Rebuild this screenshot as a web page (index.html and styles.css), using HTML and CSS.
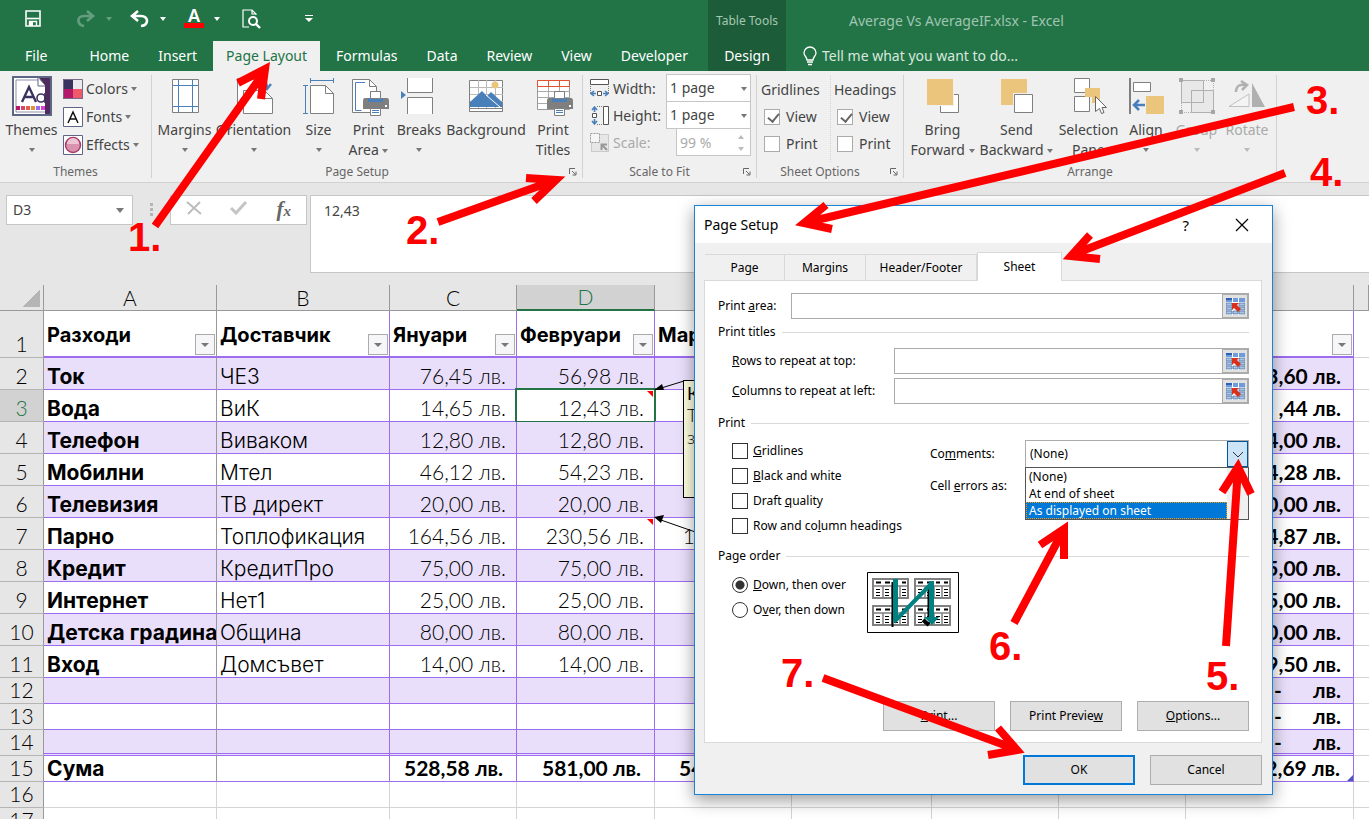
FILE: index.html
```html
<!DOCTYPE html>
<html lang="en">
<head>
  <meta charset="UTF-8" />
  <meta name="viewport" content="width=device-width, initial-scale=1.0" />
  <title>Average Vs AverageIF.xlsx - Excel</title>
  <link rel="stylesheet" href="styles.css">
</head>
<body>

  <header class="app-header">
    <div class="title-row">
      <div class="qat">
        <button class="save" aria-label="Save"><svg width="16" height="17" viewBox="0 0 16 17" fill="none" stroke="#fff" stroke-width="1.6"><path d="M1 1h14v15H1z"/><path d="M2 8.500h12" /><path d="M4.500 16v-4.500h7V16" stroke-width="1.400"/><path d="M5 12h3v4H5z" fill="#fff" stroke="none"/></svg></button>
        <button class="dim" aria-label="Redo"><svg width="20" height="18" viewBox="0 0 20 18" fill="none" stroke="#fff" stroke-width="2.6"><path d="M11 1l6 5-6 5M17 6H8c-8 0-7 9 0 10"/></svg><i class="caret"></i></button>
        <button aria-label="Undo"><svg width="20" height="18" viewBox="0 0 20 18" fill="none" stroke="#fff" stroke-width="2.6"><path d="M8 1L2 6l6 5M2 6h9c8 0 8 9 0 10"/></svg><i class="caret"></i></button>
        <button aria-label="Font color"><span class="font-color">A</span><i class="caret"></i></button>
        <button class="preview" aria-label="Print preview"><svg width="20" height="20" viewBox="0 0 20 20" fill="none" stroke="#fff" stroke-width="1.2"><path d="M7 18H1V1h9l4 4v1M10 1v4h4"/><circle cx="11" cy="12" r="4" stroke-width="2"/><path d="M14 15l4 4" stroke-width="2.4"/></svg></button>
        <button aria-label="Customize"><i class="caret barred"></i></button>
      </div>
      <div class="context-title">Table Tools</div>
      <div class="doc-title">Average Vs AverageIF.xlsx - Excel</div>
    </div>
    <div class="tab-row">
      <nav class="tabs">
        <a href="#" class="file">File</a>
        <a href="#">Home</a>
        <a href="#">Insert</a>
        <a href="#" class="active">Page Layout</a>
        <a href="#">Formulas</a>
        <a href="#">Data</a>
        <a href="#">Review</a>
        <a href="#">View</a>
        <a href="#">Developer</a>
      </nav>
      <a href="#" class="design">Design</a>
      <button class="tell-me"><svg width="14" height="20" viewBox="0 0 14 20" fill="none" stroke="#fff" stroke-width="1.3"><path d="M4 14c0-3-3-4-3-7a6 6 0 0 1 12 0c0 3-3 4-3 7zM4 16h6M5 18.500h4"/></svg>Tell me what you want to do...</button>
    </div>
  </header>

  <section class="ribbon">
    <div class="group themes">
      <div class="group-body">
        <button class="big"><svg width="40" height="40" viewBox="0 0 40 40"><path d="M1 1h38v38H1z" fill="#fff" stroke="#5d6785" stroke-width="2"/><path d="M4 4h24l6 6v26H4z" fill="#fff" stroke="#8d94ab"/><path d="M27 2h11v36h-5V9z" fill="#4f2a5c"/><path d="M26 2v8h7" fill="#fff" stroke="#5d6785"/><path d="M10 26l7-15 7 15M12.500 21h9" fill="none" stroke="#3b335f" stroke-width="2.400"/><circle cx="29" cy="22" r="4" fill="none" stroke="#3b335f" stroke-width="1.600"/><path d="M33 17v10" stroke="#3b335f" stroke-width="1.600"/><path d="M4 30h4v4H4z" fill="#b5176b"/><path d="M9 30h4v4H9z" fill="#d9445f"/><path d="M14 30h4v4h-4z" fill="#e25e4b"/><path d="M19 30h4v4h-4z" fill="#e0913c"/><path d="M24 30h4v4h-4z" fill="#9a6cf0"/><path d="M29 30h4v4h-4z" fill="#dd3fd0"/></svg><span>Themes</span><i class="caret"></i></button>
        <div class="stack">
          <button><svg width="20" height="20" viewBox="0 0 20 20"><path d="M0 0h10v10H0z" fill="#3b335f"/><path d="M10 0h10v10H10z" fill="#e9e9ee"/><path d="M0 10h10v10H0z" fill="#b5176b"/><path d="M10 10h10v10H10z" fill="#f0596a"/><path d="M.5.5h19v19H.5z" fill="none" stroke="#776a86"/></svg>Colors<i class="caret"></i></button>
          <button><svg width="20" height="20" viewBox="0 0 20 20"><path d="M.5.5h19v19H.5z" fill="#fff" stroke="#5d6785"/><path d="M5 16l5-11 5 11M6.500 12h7" fill="none" stroke="#111" stroke-width="1.500"/></svg>Fonts<i class="caret"></i></button>
          <button><svg width="20" height="20" viewBox="0 0 20 20"><path d="M.5.5h19v19H.5z" fill="#fff" stroke="#5d6785"/><circle cx="10" cy="10" r="7.500" fill="#d893ae" stroke="#a83a6c" stroke-width="1.500"/><path d="M4 9a6 6 0 0 1 12 0z" fill="#ecc6d4"/></svg>Effects<i class="caret"></i></button>
        </div>
      </div>
      <div class="group-label">Themes</div>
    </div>

    <div class="group page-setup">
      <div class="group-body">
        <button class="big margins"><svg width="40" height="40" viewBox="0 0 40 40"><path d="M7.500 3.500h26v33h-26z" fill="#fff" stroke="#7f7f7f"/><path d="M13.500 4v32M27.500 4v32M8 9.500h25M8 30.500h25" stroke="#4a80ba"/></svg><span>Margins</span><i class="caret"></i></button>
        <button class="big orientation"><svg width="40" height="40" viewBox="0 0 40 40"><path d="M3.500 32.500v-30h15l6 6v10" fill="#fff" stroke="#7f7f7f"/><path d="M9.500 37.500v-23h21l8 8v15z" fill="#fff" stroke="#7f7f7f"/><path d="M30.500 14.500v8h8" fill="none" stroke="#7f7f7f"/><path d="M24 4q9 0 9 8M28 8l5 5 4-5" fill="none" stroke="#4a80ba" stroke-width="2.500"/></svg><span>Orientation</span><i class="caret"></i></button>
        <button class="big size"><svg width="40" height="40" viewBox="0 0 40 40"><path d="M11.500 9.500h15l8 8v20h-23z" fill="#fff" stroke="#7f7f7f"/><path d="M26.500 9.500v8h8" fill="none" stroke="#7f7f7f"/><path d="M11.500 2v5M34.500 2v5M11 4.500h24M4 9.500h5M4 37.500h5M6.500 9v29" stroke="#4a80ba"/></svg><span>Size</span><i class="caret"></i></button>
        <button class="big print-area"><svg width="40" height="40" viewBox="0 0 40 40"><path d="M3.500 3.500h17l7 7v26h-24z" fill="#fff" stroke="#7f7f7f"/><path d="M20.500 3.500v7h7" fill="none" stroke="#7f7f7f"/><path d="M16 6.500H6.500v28h6" fill="none" stroke="#4a80ba"/><use href="#printer"/></svg><span>Print<br>Area <i class="caret"></i></span></button>
        <button class="big breaks"><svg width="40" height="40" viewBox="0 0 40 40"><path d="M8.500 2v14.500h25V2M8.500 38V21.500h25V38" fill="#fff" stroke="#7f7f7f"/><path d="M2 15l5 4-5 4z" fill="#4a80ba"/></svg><span>Breaks</span><i class="caret"></i></button>
        <button class="big background"><svg width="40" height="40" viewBox="0 0 40 40"><path d="M3.500 4.500h33v31h-33z" fill="#fff" stroke="#7f7f7f"/><path d="M12.500 4v31M20.500 4v31M29.500 4v31M4 11.500h33M4 18.500h33M4 25.500h33" stroke="#bbb"/><path d="M4 31v-5l12-11 5 5 4-4 11 10v5z" fill="#4a80ba"/><path d="M20 19l14 12" stroke="#fff"/><circle cx="29" cy="9" r="3.500" fill="#ecc57c"/><path d="M3.500 32.500h33v3h-33z" fill="#fff" stroke="#7f7f7f"/></svg><span>Background</span></button>
        <button class="big titles"><svg width="40" height="40" viewBox="0 0 40 40"><path d="M4.500 4.500h32v29h-32z" fill="#fff" stroke="#999"/><path d="M15.500 9v24M26.500 9v24M5 15.500h32M5 21.500h32M5 27.500h32" stroke="#aaa"/><path d="M4.500 4.500h32v6h-32zM15.500 5v5M26.500 5v5" fill="#fff" stroke="#e0532f"/><use href="#printer"/></svg><span>Print<br>Titles</span></button>
      </div>
      <div class="group-label with-launcher">Page Setup<button class="launcher" aria-label="Page Setup options"><svg width="9" height="9" viewBox="0 0 9 9"><use href="#launch"/></svg></button></div>
    </div>

    <div class="group scale">
      <div class="group-body rows">
        <div class="row"><svg width="20" height="20" viewBox="0 0 20 20"><path d="M.5.5h18v5H.5z" fill="#fff" stroke="#555"/><path d="M.5 7v8M18.500 7v8" stroke="#777" stroke-dasharray="1 1"/><path d="M7.500 12.500h4v4h-4z" fill="#fff" stroke="#555"/><path d="M6 14.500H1M4 12l-3 2.500L4 17M13 14.500h5M15 12l3 2.500-3 2.500" fill="none" stroke="#4a80ba" stroke-width="1.600"/></svg><label for="w">Width:</label><select id="w"><option>1 page</option></select><i class="caret"></i></div>
        <div class="row"><svg width="20" height="20" viewBox="0 0 20 20"><path d="M13.500.5h5v18h-5z" fill="#fff" stroke="#555"/><path d="M7 .5h6M7 18.500h6" stroke="#777" stroke-dasharray="1 1"/><path d="M2.500 7.500h4v4h-4z" fill="#fff" stroke="#555"/><path d="M4.500 6V1M2 4l2.500-3L7 4M4.500 13v5M2 15l2.500 3L7 15" fill="none" stroke="#4a80ba" stroke-width="1.600"/></svg><label for="h">Height:</label><select id="h"><option>1 page</option></select><i class="caret"></i></div>
        <div class="row off"><svg width="20" height="20" viewBox="0 0 20 20"><path d="M1.500 1.500h17v17h-17z" fill="#e6e6e6" stroke="#aaa" stroke-dasharray="1 1"/><path d="M.5.5h9v9h-9z" fill="#f6f6f6" stroke="#999" stroke-dasharray="2 1"/><path d="M17 17l-5-5M11.500 17v-5.500H17" fill="none" stroke="#999" stroke-width="2"/></svg><label for="sc">Scale:</label><input id="sc" type="text" value="99 %" disabled><span class="spin"><i class="caret up"></i><i class="caret"></i></span></div>
      </div>
      <div class="group-label with-launcher">Scale to Fit<button class="launcher" aria-label="Scale options"><svg width="9" height="9" viewBox="0 0 9 9"><use href="#launch"/></svg></button></div>
    </div>

    <div class="group sheet-options">
      <div class="group-body">
        <div class="option-col"><span>Gridlines</span><label><input type="checkbox" checked>View</label><label><input type="checkbox">Print</label></div>
        <div class="option-col"><span>Headings</span><label><input type="checkbox" checked>View</label><label><input type="checkbox">Print</label></div>
      </div>
      <div class="group-label with-launcher">Sheet Options<button class="launcher" aria-label="Sheet options"><svg width="9" height="9" viewBox="0 0 9 9"><use href="#launch"/></svg></button></div>
    </div>

    <div class="group arrange">
      <div class="group-body">
        <button class="big bring"><svg width="40" height="40" viewBox="0 0 40 40"><path d="M17.500 18.500h18v18h-18z" fill="#fff" stroke="#7f7f7f"/><path d="M3 1h28v29H3z" fill="#f0f0f0"/><path d="M4 3h26v26H4z" fill="#ecc57c"/></svg><span>Bring<br>Forward <i class="caret"></i></span></button>
        <button class="big send"><svg width="40" height="40" viewBox="0 0 40 40"><path d="M4 3h26v26H4z" fill="#ecc57c"/><path d="M16 17h21v21H16z" fill="#f0f0f0"/><path d="M17.500 18.500h18v18h-18z" fill="#fff" stroke="#7f7f7f"/></svg><span>Send<br>Backward <i class="caret"></i></span></button>
        <button class="big selection"><svg width="40" height="40" viewBox="0 0 40 40"><path d="M5.500 2.500h15v14h-15zM5.500 20.500h15v15h-15z" fill="#fff" stroke="#7f7f7f"/><path d="M16 12h15v15h-8v-6h-7z" fill="#ecc57c"/><path d="M26.500 20.500v15l4-3 2 5 2.500-1-2-5h4.500z" fill="#fff" stroke="#666"/></svg><span>Selection<br>Pane</span></button>
        <button class="big align"><svg width="40" height="40" viewBox="0 0 40 40"><path d="M3 2h2v36H3z" fill="#7f7f7f"/><path d="M7.500 6.500h17v9h-17z" fill="#fff" stroke="#7f7f7f"/><path d="M20 20h18v18H20z" fill="#ecc57c"/><path d="M19 29H8M13 24l-5 5 5 5" fill="none" stroke="#4a80ba" stroke-width="2.500"/></svg><span>Align</span><i class="caret"></i></button>
        <button class="big group-btn off" disabled><svg width="40" height="40" viewBox="0 0 40 40"><path d="M4.500 4.500h22v22h-22zM14.500 14.500h22v22h-22z" fill="#e8e8e8" stroke="#b0b0b0"/><path d="M4.500 7v28M36.500 7v28M7 4.500h28M7 36.500h28" stroke="#b0b0b0" stroke-dasharray="1 1"/><path d="M14.500 14.500h12v12h-12z" fill="none" stroke="#b0b0b0"/><path d="M2 2h4v4H2zM34 2h4v4h-4zM2 34h4v4H2zM34 34h4v4h-4z" fill="#a6a6a6"/></svg><span>Group</span><i class="caret"></i></button>
        <button class="big rotate off" disabled><svg width="40" height="40" viewBox="0 0 40 40"><path d="M2 30.500h20V18z" fill="#f4f4f4" stroke="#c0c0c0"/><path d="M25 31V7l13 24z" fill="#b0b0b0"/><path d="M9 16c0-7 5-8 10-7M14 5l6 4-5 5" fill="none" stroke="#b0b0b0" stroke-width="2.500"/></svg><span>Rotate</span><i class="caret"></i></button>
      </div>
      <div class="group-label">Arrange</div>
    </div>
  </section>

  <section class="formula-bar">
    <div class="name-box"><input type="text" value="D3" aria-label="Name box"><i class="caret"></i></div>
    <i class="dots"></i>
    <div class="fx-buttons">
      <button aria-label="Cancel"><svg width="16" height="16" viewBox="0 0 16 16" stroke="#bdbdbd" stroke-width="2"><path d="M1 2l14 12M14 2L2 14"/></svg></button>
      <button aria-label="Enter"><svg width="18" height="14" viewBox="0 0 18 14" fill="none" stroke="#c4c4c4" stroke-width="3"><path d="M1 7l5 5L16 1"/></svg></button>
      <button class="fx" aria-label="Insert function"><i>f<small>x</small></i></button>
    </div>
    <textarea aria-label="Formula bar">12,43</textarea>
  </section>

  <main class="sheet">
    <table>
      <colgroup><col class="c-head"><col class="c-a"><col class="c-a"><col class="c-c"><col class="c-d"><col class="c-e"><col class="c-f"><col class="c-c"><col class="c-c"><col class="c-i"><col></colgroup>
      <thead>
        <tr><th class="corner"></th><th>A</th><th>B</th><th>C</th><th class="sel">D</th><th></th><th></th><th></th><th></th><th></th><th></th></tr>
      </thead>
      <tbody>
        <tr class="names"><th>1</th>
          <td><div>Разходи<button aria-label="Filter"><i class="caret"></i></button></div></td>
          <td><div>Доставчик<button aria-label="Filter"><i class="caret"></i></button></div></td>
          <td><div>Януари<button aria-label="Filter"><i class="caret"></i></button></div></td>
          <td><div>Февруари<button aria-label="Filter"><i class="caret"></i></button></div></td>
          <td><div>Март</div></td>
          <td></td><td></td><td></td>
          <td><div><span></span><button aria-label="Filter"><i class="caret"></i></button></div></td><td></td></tr>
        <tr class="band"><th>2</th><td>Ток</td><td>ЧЕЗ</td><td>76,45 лв.</td><td>56,98 лв.</td><td></td><td></td><td></td><td></td><td>3,60 лв.</td><td></td></tr>
        <tr><th class="sel">3</th><td>Вода</td><td>ВиК</td><td>14,65 лв.</td><td class="cursor">12,43 лв.</td><td></td><td></td><td></td><td></td><td>,44 лв.</td><td></td></tr>
        <tr class="band"><th>4</th><td>Телефон</td><td>Виваком</td><td>12,80 лв.</td><td>12,80 лв.</td><td></td><td></td><td></td><td></td><td>4,00 лв.</td><td></td></tr>
        <tr><th>5</th><td>Мобилни</td><td>Мтел</td><td>46,12 лв.</td><td>54,23 лв.</td><td></td><td></td><td></td><td></td><td>4,28 лв.</td><td></td></tr>
        <tr class="band"><th>6</th><td>Телевизия</td><td>ТВ директ</td><td>20,00 лв.</td><td>20,00 лв.</td><td></td><td></td><td></td><td></td><td>0,00 лв.</td><td></td></tr>
        <tr><th>7</th><td>Парно</td><td>Топлофикация</td><td>164,56 лв.</td><td class="noted">230,56 лв.</td><td>164,56 лв.</td><td></td><td></td><td></td><td>4,87 лв.</td><td></td></tr>
        <tr class="band"><th>8</th><td>Кредит</td><td>КредитПро</td><td>75,00 лв.</td><td>75,00 лв.</td><td></td><td></td><td></td><td></td><td>5,00 лв.</td><td></td></tr>
        <tr><th>9</th><td>Интернет</td><td>Нет1</td><td>25,00 лв.</td><td>25,00 лв.</td><td></td><td></td><td></td><td></td><td>5,00 лв.</td><td></td></tr>
        <tr class="band"><th>10</th><td>Детска градина</td><td>Община</td><td>80,00 лв.</td><td>80,00 лв.</td><td></td><td></td><td></td><td></td><td>0,00 лв.</td><td></td></tr>
        <tr><th>11</th><td>Вход</td><td>Домсъвет</td><td>14,00 лв.</td><td>14,00 лв.</td><td></td><td></td><td></td><td></td><td>9,50 лв.</td><td></td></tr>
        <tr class="band short"><th>12</th><td></td><td></td><td></td><td></td><td></td><td></td><td></td><td></td><td><div class="empty"><span>-</span><span>лв.</span></div></td><td></td></tr>
        <tr class="short"><th>13</th><td></td><td></td><td></td><td></td><td></td><td></td><td></td><td></td><td><div class="empty"><span>-</span><span>лв.</span></div></td><td></td></tr>
        <tr class="band short last"><th>14</th><td></td><td></td><td></td><td></td><td></td><td></td><td></td><td></td><td><div class="empty"><span>-</span><span>лв.</span></div></td><td></td></tr>
        <tr class="short total"><th>15</th><td>Сума</td><td></td><td>528,58 лв.</td><td>581,00 лв.</td><td>548,12 лв.</td><td></td><td></td><td></td><td class="end">2,69 лв.</td><td></td></tr>
        <tr class="short blank"><th>16</th><td></td><td></td><td></td><td></td><td></td><td></td><td></td><td></td><td></td><td></td></tr>
        <tr class="short blank"><th>17</th><td></td><td></td><td></td><td></td><td></td><td></td><td></td><td></td><td></td><td></td></tr>
      </tbody>
    </table>
    <div class="note"><b>К</b><br>Т<br>з</div>
    <svg class="note-lines" width="60" height="170" viewBox="0 0 60 170"><path d="M34 11L8 19M54 165L8 149" stroke="#000"/><path d="M4 20l8-6 2 6zM4 147l10-2-3 8z"/></svg>
  </main>

  <section class="dialog" role="dialog" aria-label="Page Setup">
    <div class="dialog-title"><h1>Page Setup</h1><button aria-label="Help">?</button><button aria-label="Close"><svg width="14" height="14" viewBox="0 0 14 14" stroke="#000" stroke-width="1.200"><path d="M1 1l12 12M13 1L1 13"/></svg></button></div>
    <div class="dialog-tabs">
      <button class="t-page">Page</button><button class="t-margins">Margins</button><button class="t-header">Header/Footer</button><button class="t-sheet">Sheet</button>
    </div>
    <div class="panel">
      <div class="field"><label for="area">Print <u>a</u>rea:</label><div class="range"><input id="area" type="text"><button aria-label="Select range"><svg width="19" height="17" viewBox="0 0 19 17"><use href="#picker"/></svg></button></div></div>
      <div class="legend">Print titles</div>
      <div class="field wide"><label for="rows"><u>R</u>ows to repeat at top:</label><div class="range"><input id="rows" type="text"><button aria-label="Select rows"><svg width="19" height="17" viewBox="0 0 19 17"><use href="#picker"/></svg></button></div></div>
      <div class="field wide"><label for="cols"><u>C</u>olumns to repeat at left:</label><div class="range"><input id="cols" type="text"><button aria-label="Select columns"><svg width="19" height="17" viewBox="0 0 19 17"><use href="#picker"/></svg></button></div></div>
      <div class="legend print">Print</div>
      <div class="print-options">
        <div class="checks">
          <label><input type="checkbox"><span><u>G</u>ridlines</span></label>
          <label><input type="checkbox"><span><u>B</u>lack and white</span></label>
          <label><input type="checkbox"><span>Draft <u>q</u>uality</span></label>
          <label><input type="checkbox"><span>Row and co<u>l</u>umn headings</span></label>
        </div>
        <div class="combos">
          <div class="combo"><label for="comments">Co<u>m</u>ments:</label>
            <div class="combo-box"><select id="comments"><option>(None)</option><option>At end of sheet</option><option>As displayed on sheet</option></select><span class="drop"><svg width="12" height="7" viewBox="0 0 12 7" fill="none" stroke="#333"><path d="M1 1l5 5 5-5"/></svg></span>
              <ul class="menu" role="listbox"><li role="option">(None)</li><li role="option">At end of sheet</li><li role="option" class="hot">As displayed on sheet</li></ul>
            </div>
          </div>
          <div class="combo"><label for="errors">Cell <u>e</u>rrors as:</label><div class="combo-box"><select id="errors"></select></div></div>
        </div>
      </div>
      <div class="legend">Page order</div>
      <div class="order">
        <div class="checks">
          <label><input type="radio" name="order" checked><span><u>D</u>own, then over</span></label>
          <label><input type="radio" name="order"><span>O<u>v</u>er, then down</span></label>
        </div>
        <svg class="order-pic" width="92" height="61" viewBox="0 0 92 61">
          <path d="M.5.500h91v60H.5z" fill="#fff" stroke="#000"/>
          <use href="#sheetlet" x="5" y="6"/><use href="#sheetlet" x="47" y="6"/><use href="#sheetlet" x="5" y="33"/><use href="#sheetlet" x="47" y="33"/>
          <path d="M25.500 10v45M61.500 18v30" stroke="#000" stroke-width="2"/><path d="M56 48l6 5" stroke="#000" stroke-width="4"/>
          <path d="M28.500 7v42M64.500 9v38" stroke="#008080" stroke-width="5" fill="none"/><path d="M27 50L65 11" stroke="#008080" stroke-width="4"/><path d="M57 45h15l-7 8z" fill="#008080"/>
        </svg>
      </div>
      <div class="actions"><button><u>P</u>rint...</button><button>Print Previe<u>w</u></button><button><u>O</u>ptions...</button></div>
    </div>
    <div class="actions footer"><button class="ok">OK</button><button>Cancel</button></div>
  </section>

  <svg class="callouts" width="1369" height="819" viewBox="0 0 1369 819">
    <g fill="none" stroke="#f00" stroke-width="8" stroke-miterlimit="10">
      <path d="M155 226L265 71M238 83L265 69L261 99"/>
      <path d="M438 222L553 181M526 178L556 180L534 201"/>
      <path d="M1294 107L808 222M826 205L804 223L832 229"/>
      <path d="M1285 173L1074 254M1090 235L1071 256L1100 259"/>
      <path d="M1226 646L1238 468M1222 492L1238 467L1251 494"/>
      <path d="M1014 623L1063 531M1040 545L1064 529L1064 559"/>
      <path d="M823 678L1018 750M998 728L1017 750L988 755"/>
    </g>
    <g class="numbers">
      <text x="128" y="251">1.</text><text x="406" y="244">2.</text><text x="1306" y="114">3.</text><text x="1310" y="186">4.</text>
      <text x="1206" y="690">5.</text><text x="989" y="660">6.</text><text x="781" y="687">7.</text>
    </g>
  </svg>

  <!-- shared icon parts -->
  <svg class="defs" width="0" height="0">
    <defs>
      <g id="printer"><path d="M21.500 15.500h10v8h-10z" fill="#fff" stroke="#7f7f7f"/><path d="M16 22h22q2 0 2 3v8H14v-8q0-3 2-3z" fill="#7f7f7f"/><path d="M19 22h15v4H19z" fill="#4a80ba"/><path d="M21.500 15.500h10v7h-10zM21.500 32.500h10v7h-10z" fill="#fff" stroke="#7f7f7f"/><path d="M23 34.500h7M23 36.500h7" stroke="#4a80ba"/><path d="M36 29h2v2h-2z" fill="#fff"/></g>
      <g id="launch" fill="none" stroke="#666"><path d="M1.500 7V1.500H7M4 4l3.500 3.500M8 4.500V8H4.500"/></g>
      <g id="picker"><path d="M0 0h19v17H0z" fill="#fff"/><path d="M0 0h6v4H0zM7 0h5v4H7zM13 0h6v4h-6z" fill="#6f9bdc"/><path d="M0 0h6v2H0z" fill="#2f5fb3"/><path d="M0 5h6v3H0zM13 5h6v3h-6zM0 9h6v3H0zM13 9h6v3h-6zM0 13h6v3H0zM7 13h5v3H7zM13 13h6v3h-6z" fill="#a9c3e4" stroke="#385e94" stroke-width=".6"/><path d="M6 5h7l-2 2 4 4-3 3-4-4-2 2z" fill="#d8301c"/></g>
      <g id="sheetlet"><path d="M1 1h35v19H1z" fill="#fff" stroke="#808080" stroke-width="2"/><path d="M1 8h35M11 8v12M20 8v12M28 8v12" stroke="#808080" stroke-width="1.500"/><path d="M4 4.500h5M13 4.500h5M22 4.500h4M30 4.500h4" stroke="#000" stroke-width="2"/><path d="M4 11.500h4M13 11.500h4M22 11.500h4M30 11.500h4M4 14.500h4M13 14.500h4M22 14.500h4M30 14.500h4M4 17.500h4M13 17.500h4M22 17.500h4M30 17.500h4" stroke="#000"/></g>
    </defs>
  </svg>

</body>
</html>
```

FILE: styles.css
```css
* {
  margin: 0;
  padding: 0;
  box-sizing: border-box;
}
body {
  font-family: 'Noto Sans', 'Open Sans', sans-serif;
  font-size: 14px;
  line-height: 20px;
  color: #444;
  background-color: #e6e6e6;
  position: relative;
  height: 100vh;
  overflow: hidden;
}
button, input, select, textarea {
  font: inherit;
  color: inherit;
  background: none;
  border: none;
  border-radius: 0;
  appearance: none;
}
button {
  white-space: nowrap;
}
a {
  color: inherit;
  text-decoration: none;
}
svg {
  flex: none;
}
.caret {
  display: inline-block;
  flex: none;
  width: 0;
  height: 0;
  border: 3px solid transparent;
  border-top: 4px solid #777;
  border-bottom: 0;
  vertical-align: middle;
}
.caret.up {
  border-top: 0;
  border-bottom: 4px solid #bbb;
}

/* title bar and tabs */
.app-header {
  background-color: #227447;
  color: #fff;
}
.title-row, .tab-row {
  display: flex;
}
.title-row {
  height: 41px;
}
.qat {
  display: flex;
  align-items: center;
  flex: 0 0 708px;
  gap: 18px;
  padding: 0 0 4px 25px;
}
.qat button {
  display: flex;
  align-items: center;
  gap: 10px;
}
.qat .save {
  margin-right: 17px;
}
.qat .preview {
  margin: 0 25px 0 4px;
}
.qat .dim {
  opacity: 0.3;
}
.qat .caret {
  border-top-color: #fff;
}
.qat .barred {
  width: 8px;
  height: 7px;
  border: none;
  border-top: 1px solid #fff;
  position: relative;
}
.qat .barred::after {
  content: "";
  position: absolute;
  left: 0;
  top: 2px;
  border: 4px solid transparent;
  border-top-color: #fff;
  border-bottom: 0;
}
.font-color {
  width: 20px;
  height: 19px;
  border-bottom: 5px solid #f00;
  font-size: 18px;
  font-weight: 600;
  line-height: 13px;
  text-align: center;
}
.context-title {
  flex: 0 0 78px;
  background-color: #1c5c39;
  color: #a5c7b3;
  font-size: 12px;
  line-height: 42px;
  text-align: center;
  white-space: nowrap;
}
.doc-title {
  flex: 1;
  padding-left: 63px;
  line-height: 41px;
  color: #a0c4b0;
}
.tab-row {
  height: 30px;
  line-height: 30px;
}
.tabs {
  display: flex;
  flex: 0 0 708px;
  gap: 3px;
}
.tabs a {
  padding: 0 13px;
}
.tabs .file {
  padding: 0 26px 0 25px;
}
.tabs .active {
  background-color: #f0f0f0;
  color: #227447;
}
.design {
  flex: 0 0 78px;
  background-color: #1c5c39;
  text-align: center;
}
.tell-me {
  display: flex;
  align-items: center;
  gap: 5px;
  padding-left: 17px;
  color: #d8e8de;
}

/* ribbon */
.ribbon {
  display: flex;
  height: 112px;
  background-color: #f0f0f0;
  border-bottom: 1px solid #d2d2d2;
}
.group {
  display: flex;
  flex-direction: column;
  flex: none;
  margin: 4px 0;
  border-right: 1px solid #d2d2d2;
}
.group-body {
  display: flex;
  flex: none;
  height: 87px;
}
.group-label {
  display: flex;
  justify-content: center;
  position: relative;
  font-size: 12px;
  line-height: 20px;
  color: #666;
}
.with-launcher {
  padding-right: 20px;
}
.launcher {
  position: absolute;
  right: 5px;
  top: 0;
}
.themes {
  width: 152px;
}
.page-setup {
  width: 431px;
}
.scale {
  width: 174px;
}
.sheet-options {
  width: 147px;
}
.arrange {
  width: 373px;
}
.page-setup .group-body {
  padding-left: 6px;
}
.arrange .group-body {
  padding-left: 4px;
}
.big {
  display: flex;
  flex-direction: column;
  align-items: center;
  flex: none;
  padding-top: 1px;
  line-height: 20px;
}
.big svg {
  margin-bottom: 4px;
}
.big > .caret {
  margin-top: 8px;
}
.themes .big {
  width: 63px;
}
.margins {
  width: 53px;
}
.orientation {
  width: 85px;
}
.size {
  width: 45px;
}
.print-area {
  width: 55px;
}
.breaks {
  width: 46px;
}
.background {
  width: 88px;
}
.titles {
  width: 46px;
}
.bring {
  width: 69px;
}
.send {
  width: 79px;
}
.selection {
  width: 65px;
}
.align, .rotate {
  width: 50px;
}
.group-btn {
  width: 51px;
}
.off {
  color: #aaa;
}
.off .caret {
  border-top-color: #bbb;
}
.stack button {
  display: flex;
  align-items: center;
  gap: 3px;
  height: 28px;
}
.rows {
  flex-direction: column;
  padding-left: 7px;
}
.row {
  display: flex;
  align-items: center;
  flex: none;
  position: relative;
  height: 27px;
  gap: 3px;
}
.row label {
  flex: 1;
}
.row select, .row input {
  width: 85px;
  height: 28px;
  margin: -1px 5px 0 0;
  padding-left: 3px;
  background-color: #fff;
  border: 1px solid #c6c6c6;
}
.row input {
  width: 75px;
}
.row > .caret {
  position: absolute;
  right: 9px;
}
.spin {
  display: flex;
  flex-direction: column;
  gap: 8px;
  position: absolute;
  right: 12px;
}
.sheet-options .group-body {
  padding-left: 4px;
}
.option-col {
  display: flex;
  flex-direction: column;
  flex: 0 0 73px;
  white-space: nowrap;
  line-height: 27px;
}
.option-col + .option-col {
  border-left: 1px dotted #d2d2d2;
  padding-left: 3px;
  margin-left: -4px;
  flex-basis: 77px;
}
.option-col span {
  padding-top: 1px;
}
.option-col label {
  display: flex;
  align-items: center;
  gap: 6px;
  padding-left: 3px;
}
input[type=checkbox] {
  flex: none;
  width: 16px;
  height: 16px;
  background-color: #fff;
  border: 1px solid #ababab;
}
input[type=checkbox]:checked::after {
  content: "";
  display: block;
  width: 5px;
  height: 9px;
  margin: 1px 0 0 5px;
  border: solid #666;
  border-width: 0 2px 2px 0;
  transform: rotate(40deg);
}

/* formula bar */
.formula-bar {
  display: flex;
  align-items: flex-start;
  height: 102px;
  padding: 12px 0 0 6px;
}
.name-box {
  display: flex;
  align-items: center;
  width: 127px;
  height: 30px;
  padding: 0 8px 0 6px;
  background-color: #fff;
  border: 1px solid #c6c6c6;
}
.name-box input {
  flex: 1;
  min-width: 0;
}
.name-box .caret {
  border-width: 5px 4px 0;
}
.dots {
  width: 3px;
  height: 13px;
  margin: 8px 17px;
  border-top: 3px solid #b5b5b5;
  border-bottom: 3px solid #b5b5b5;
  background: linear-gradient(#b5b5b5, #b5b5b5) 0 2px / 3px 3px no-repeat;
}
.fx-buttons {
  display: flex;
  align-items: center;
  justify-content: space-between;
  width: 137px;
  height: 30px;
  padding: 0 15px;
  background-color: #fff;
  border: 1px solid #c6c6c6;
}
.fx {
  font-family: 'Liberation Serif', serif;
  font-size: 21px;
  font-weight: bold;
  color: #666;
}
.fx small {
  font-size: 15px;
}
.formula-bar textarea {
  flex: 1;
  height: 78px;
  margin-left: 3px;
  padding: 5px 13px;
  background-color: #fff;
  border: 1px solid #c6c6c6;
  border-right: none;
  resize: none;
}

/* grid */
.sheet {
  position: relative;
  font-family: 'Lato', 'Inter', sans-serif;
  font-size: 21px;
  font-weight: 300;
  color: #000;
}
table {
  width: 100%;
  table-layout: fixed;
  border-spacing: 0;
  background-color: #fff;
}
.c-head {
  width: 44px;
}
.c-a {
  width: 173px;
}
.c-c {
  width: 127px;
}
.c-d {
  width: 138px;
}
.c-e {
  width: 137px;
}
.c-f {
  width: 140px;
}
.c-i {
  width: 168px;
}
th {
  height: 26px;
  background-color: #e6e6e6;
  border-right: 1px solid #999;
  border-bottom: 1px solid #999;
  font-weight: 300;
  line-height: 24px;
  vertical-align: bottom;
}
tbody th {
  padding-bottom: 1px;
  border-bottom-color: #b5b5b5;
}
th.sel {
  background-color: #d2d2d2;
  color: #227447;
}
thead .sel {
  border-bottom: 2px solid #227447;
}
.corner {
  background: linear-gradient(135deg, transparent 50%, #b5b5b5 50%) 22px 5px / 18px 17px no-repeat #e6e6e6;
}
td {
  position: relative;
  height: 32px;
  padding: 0 10px 1px 3px;
  border-right: 1px solid #9d6cef;
  border-bottom: 1px solid #9d6cef;
  line-height: 24px;
  text-align: right;
  vertical-align: bottom;
  white-space: nowrap;
}
td:nth-child(2), td:nth-child(3) {
  padding-right: 0;
  padding-bottom: 0;
  font-family: 'Inter', sans-serif;
  text-align: left;
  overflow: hidden;
}
td:nth-child(2) {
  border-right-color: #999;
  font-weight: 700;
}
td:nth-child(10) {
  padding-right: 12px;
  font-weight: 700;
}
td:last-child {
  border-color: #d4d4d4;
  border-right: none;
}
.band td:not(:last-child) {
  background-color: #e9dffb;
}
.names td {
  height: 47px;
  padding: 0 1px 1px 3px;
  border-bottom-width: 2px;
  font-family: 'Inter', sans-serif;
  font-size: 20px;
  font-weight: 700;
}
.names td:nth-child(10) {
  padding-right: 1px;
}
.names td:last-child {
  border-bottom-width: 1px;
}
.names div {
  display: flex;
  align-items: flex-end;
  justify-content: space-between;
  line-height: 40px;
}
.names button {
  display: flex;
  align-items: center;
  justify-content: center;
  width: 20px;
  height: 21px;
  margin-left: -20px;
  background-color: #f6f6f8;
  border: 1px solid #ababab;
}
.names .caret {
  border-width: 4px 4px 0;
}
.short td {
  height: 26px;
}
.last td:not(:last-child) {
  padding-bottom: 0;
  line-height: 23px;
  border-bottom: 3px double #9d6cef;
}
.total td {
  padding-right: 13px;
  font-weight: 700;
}
.blank td {
  border-color: #d4d4d4;
}
.empty {
  display: flex;
  justify-content: space-between;
  padding-left: 85px;
}
.cursor::before {
  content: "";
  position: absolute;
  inset: -2px;
  border: 2px solid #227447;
}
.cursor::after, .noted::after {
  content: "";
  position: absolute;
  right: 1px;
  top: 1px;
  border: 3px solid;
  border-color: #f00 #f00 transparent transparent;
}
.end::after {
  content: "";
  position: absolute;
  right: 0;
  bottom: 0;
  border: 3px solid;
  border-color: transparent #4b57b5 #4b57b5 transparent;
}
.note {
  position: absolute;
  left: 683px;
  top: 95px;
  width: 120px;
  height: 118px;
  padding: 1px 3px;
  background-color: #ffffe1;
  border: 1px solid #000;
  font-size: 18px;
  line-height: 22px;
}
.note-lines {
  position: absolute;
  left: 650px;
  top: 85px;
}

/* page setup window */
.dialog {
  position: absolute;
  left: 694px;
  top: 205px;
  width: 579px;
  padding-bottom: 9px;
  background-color: #f0f0f0;
  border: 1px solid #1883d7;
  box-shadow: 0 5px 16px rgba(0, 0, 0, 0.4);
  color: #000;
  font-size: 12px;
}
.dialog-title {
  display: flex;
  align-items: center;
  height: 37px;
  padding: 0 23px 0 9px;
  background-color: #fff;
}
.dialog-title h1 {
  flex: 1;
  font-size: 14px;
  font-weight: 400;
}
.dialog-title button {
  display: flex;
  margin-left: 46px;
  font-size: 15px;
}
.dialog-tabs {
  display: flex;
  align-items: flex-end;
  height: 37px;
  padding-left: 10px;
}
.dialog-tabs button {
  height: 26px;
  border: 1px solid #d9d9d9;
  border-width: 1px 1px 0 0;
}
.dialog-tabs .t-page {
  width: 80px;
}
.dialog-tabs .t-margins {
  width: 81px;
}
.dialog-tabs .t-header {
  width: 111px;
}
.dialog-tabs .t-sheet {
  width: 85px;
  height: 29px;
  margin-bottom: -1px;
  padding-bottom: 1px;
  background-color: #fff;
  border-left-width: 1px;
  position: relative;
}
.panel {
  margin: 0 10px 0 9px;
  padding: 12px 12px 11px 13px;
  background-color: #fff;
  border: 1px solid #d9d9d9;
}
.field {
  display: flex;
  align-items: center;
  margin-bottom: 4px;
}
.field label {
  flex: 0 0 73px;
}
.field.wide {
  padding-left: 14px;
}
.field.wide label {
  flex-basis: 162px;
}
.range {
  display: flex;
  flex: 1;
  height: 26px;
  border: 1px solid #ababab;
}
.range input {
  flex: 1;
  min-width: 0;
}
.range button {
  display: flex;
  align-items: center;
  justify-content: center;
  width: 26px;
  background-color: #e1e1e1;
  border: 1px solid #ababab;
}
.legend {
  display: flex;
  align-items: center;
  gap: 6px;
  height: 18px;
  margin-bottom: 7px;
}
.legend::after {
  content: "";
  flex: 1;
  height: 1px;
  background-color: #d9d9d9;
}
.legend.print {
  margin: 10px 0 6px;
}
.print-options {
  display: flex;
  margin-bottom: 9px;
}
.checks {
  flex: 0 0 212px;
  padding-left: 14px;
}
.checks label {
  display: flex;
  align-items: center;
  gap: 5px;
  height: 25px;
}
.checks input[type=checkbox] {
  border-color: #333;
}
.checks input[type=radio] {
  flex: none;
  width: 16px;
  height: 16px;
  border: 1px solid #333;
  border-radius: 50%;
}
.checks input[type=radio]:checked {
  background: radial-gradient(circle, #333 4px, #fff 5px);
}
.combos {
  flex: 1;
  padding-top: 2px;
}
.combo {
  display: flex;
  align-items: center;
  margin-bottom: 4px;
}
.combo label {
  flex: 0 0 95px;
}
.combo-box {
  flex: 1;
  position: relative;
  height: 28px;
}
.combo-box select {
  width: 100%;
  height: 28px;
  padding-left: 4px;
  border: 1px solid #ababab;
}
.drop {
  display: flex;
  align-items: center;
  justify-content: center;
  position: absolute;
  right: 1px;
  top: 1px;
  width: 21px;
  height: 26px;
  background-color: #cce4f7;
  border: 1px solid #005499;
}
.menu {
  position: absolute;
  left: 0;
  top: 27px;
  z-index: 1;
  width: 100%;
  height: 53px;
  border: 1px solid #555;
  background: linear-gradient(#f0f0f0, #f0f0f0) right / 21px 100% no-repeat #fff;
  list-style: none;
}
.menu li {
  width: 201px;
  height: 17px;
  padding-left: 3px;
  line-height: 17px;
}
.menu .hot {
  background-color: #0078d7;
  color: #fff;
  outline: 1px dotted #f90;
  outline-offset: -1px;
}
.order {
  display: flex;
  margin-bottom: 68px;
}
.order .checks {
  flex-basis: 149px;
  white-space: nowrap;
}
.actions {
  display: flex;
  justify-content: flex-end;
  gap: 15px;
}
.actions button {
  width: 112px;
  height: 30px;
  background-color: #e1e1e1;
  border: 1px solid #adadad;
}
.actions .ok {
  border: 2px solid #0078d7;
}
.footer {
  margin: 12px 10px 0 0;
}

/* numbered arrows */
.callouts {
  position: absolute;
  left: 0;
  top: 0;
  z-index: 2;
  pointer-events: none;
}
.numbers {
  font-family: 'Liberation Sans', sans-serif;
  font-size: 40px;
  font-weight: 700;
  fill: #f00;
}
.defs {
  position: absolute;
}
```
